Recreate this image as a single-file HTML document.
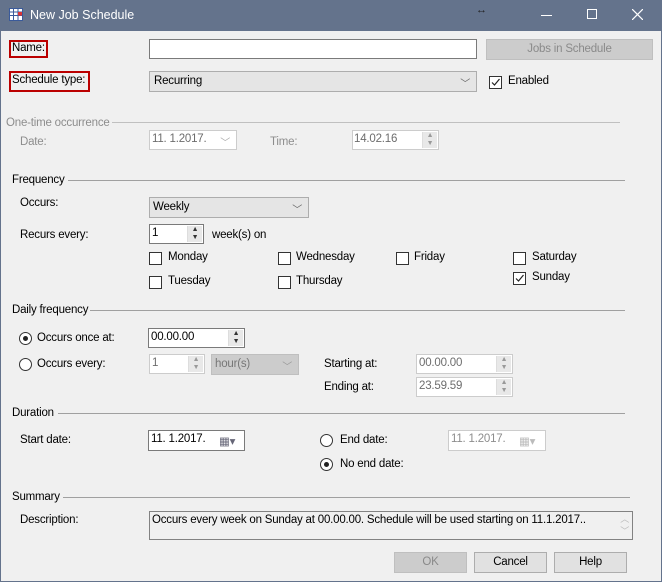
<!DOCTYPE html>
<html><head><meta charset="utf-8"><style>
*{box-sizing:border-box}
body{margin:0;width:662px;height:582px;overflow:hidden;background:#f0f0f0;font-family:"Liberation Sans",Arial,sans-serif;font-size:11.5px;letter-spacing:-0.2px;color:#000;position:relative}
.a{position:absolute;white-space:nowrap}
.win{position:absolute;left:0;top:0;width:662px;height:582px;border:1px solid #64738c;border-top:none}
.title{position:absolute;left:0;top:0;width:662px;height:31px;background:#64738c;color:#fff;font-size:12.5px;letter-spacing:0}
.box{position:absolute;background:#fff;border:1px solid #7a7a7a}
.dis{background:#fff;border-color:#ccc;color:#6d6d6d}
.combo{position:absolute;background:#e5e5e5;border:1px solid #adadad}
.line{position:absolute;height:1px;background:#a0a0a0}
.cb{position:absolute;width:13px;height:13px;border:1px solid #333;background:#fff}
.rb{position:absolute;width:13px;height:13px;border:1px solid #333;border-radius:50%;background:#fff}
.rb.on::after{content:"";position:absolute;left:3px;top:3px;width:5px;height:5px;border-radius:50%;background:#222}
.btn{position:absolute;background:#e1e1e1;border:1px solid #adadad;text-align:center;line-height:19px}
.spin{position:absolute;right:1px;top:1px;bottom:1px;width:15px;background:#e8e8e8;border-left:1px solid #ddd;font-size:7px;line-height:8px;text-align:center;color:#333}
.gray{color:#8d8d8d}
.chev{position:absolute;right:6px;top:3px;color:#666;font-size:10px}
</style></head><body>
<div class="title">
<svg class="a" style="left:9px;top:8px" width="14" height="13"><rect x="0.5" y="0.5" width="13" height="12" fill="#fff" stroke="#3a5a9a"/><path d="M0 4H14M0 7.5H14M4.5 0V13M9 0V13" stroke="#3a5a9a"/><rect x="9" y="4" width="4" height="3.5" fill="#d33"/></svg>
<span class="a" style="left:30px;top:8px">New Job Schedule</span>
<span class="a" style="left:476px;top:4px;color:#222;font-size:11px">↔</span>
<div class="a" style="left:541px;top:15px;width:11px;height:1px;background:#fff"></div>
<div class="a" style="left:587px;top:9px;width:10px;height:10px;border:1px solid #fff"></div>
<svg class="a" style="left:632px;top:9px" width="11" height="11"><path d="M0 0L11 11M11 0L0 11" stroke="#fff" stroke-width="1.2"/></svg>
</div>
<div class="win"></div>

<div class="a" style="left:9px;top:40px;width:39px;height:18px;border:2px solid #b00"></div>
<span class="a" style="left:12px;top:42px">Name:</span>
<div class="box" style="left:149px;top:39px;width:328px;height:20px"></div>
<div class="btn" style="left:486px;top:39px;width:167px;height:21px;background:#ccc;border-color:#bfbfbf;color:#8a8a8a">Jobs in Schedule</div>

<div class="a" style="left:9px;top:71px;width:81px;height:21px;border:2px solid #b00"></div>
<span class="a" style="left:12px;top:74px">Schedule type:</span>
<div class="combo" style="left:149px;top:71px;width:328px;height:21px"><span class="a" style="left:4px;top:3px">Recurring</span><span class="chev">﹀</span></div>
<div class="cb" style="left:489px;top:76px"><svg width="11" height="11" style="position:absolute;left:0;top:0"><path d="M2 5.5L4.5 8L9.5 2" stroke="#222" fill="none" stroke-width="1.2"/></svg></div>
<span class="a" style="left:508px;top:75px">Enabled</span>

<span class="a gray" style="left:6px;top:117px">One-time occurrence</span>
<div class="line" style="left:112px;top:122px;width:508px;background:#c0c0c0"></div>
<span class="a gray" style="left:20px;top:136px">Date:</span>
<div class="box dis" style="left:149px;top:130px;width:88px;height:20px"><span class="a" style="left:2px;top:2px">11.  1.2017.</span><span class="chev" style="color:#aaa">﹀</span></div>
<span class="a gray" style="left:270px;top:136px">Time:</span>
<div class="box dis" style="left:352px;top:130px;width:87px;height:20px"><span class="a" style="left:1px;top:2px">14.02.16</span><div class="spin" style="color:#999">▲<br>▼</div></div>

<span class="a" style="left:12px;top:174px">Frequency</span>
<div class="line" style="left:68px;top:180px;width:557px"></div>
<span class="a" style="left:20px;top:197px">Occurs:</span>
<div class="combo" style="left:149px;top:197px;width:160px;height:21px"><span class="a" style="left:3px;top:3px">Weekly</span><span class="chev">﹀</span></div>
<span class="a" style="left:20px;top:229px">Recurs every:</span>
<div class="box" style="left:149px;top:224px;width:55px;height:20px"><span class="a" style="left:2px;top:2px">1</span><div class="spin">▲<br>▼</div></div>
<span class="a" style="left:212px;top:229px">week(s) on</span>

<div class="cb" style="left:149px;top:252px"></div><span class="a" style="left:168px;top:251px">Monday</span>
<div class="cb" style="left:278px;top:252px"></div><span class="a" style="left:296px;top:251px">Wednesday</span>
<div class="cb" style="left:396px;top:252px"></div><span class="a" style="left:414px;top:251px">Friday</span>
<div class="cb" style="left:513px;top:252px"></div><span class="a" style="left:532px;top:251px">Saturday</span>
<div class="cb" style="left:149px;top:276px"></div><span class="a" style="left:168px;top:275px">Tuesday</span>
<div class="cb" style="left:278px;top:276px"></div><span class="a" style="left:296px;top:275px">Thursday</span>
<div class="cb" style="left:513px;top:272px"><svg width="11" height="11" style="position:absolute;left:0;top:0"><path d="M2 5.5L4.5 8L9.5 2" stroke="#222" fill="none" stroke-width="1.2"/></svg></div><span class="a" style="left:532px;top:271px">Sunday</span>

<span class="a" style="left:12px;top:304px">Daily frequency</span>
<div class="line" style="left:90px;top:310px;width:535px"></div>
<div class="rb on" style="left:19px;top:332px"></div><span class="a" style="left:37px;top:332px">Occurs once at:</span>
<div class="box" style="left:148px;top:328px;width:97px;height:20px"><span class="a" style="left:2px;top:2px">00.00.00</span><div class="spin">▲<br>▼</div></div>
<div class="rb" style="left:19px;top:358px"></div><span class="a" style="left:37px;top:358px">Occurs every:</span>
<div class="box dis" style="left:149px;top:354px;width:56px;height:20px"><span class="a" style="left:2px;top:2px">1</span><div class="spin" style="color:#999">▲<br>▼</div></div>
<div class="combo" style="left:211px;top:354px;width:88px;height:21px;background:#ccc;border-color:#bfbfbf;color:#777"><span class="a" style="left:3px;top:3px">hour(s)</span><span class="chev" style="color:#999">﹀</span></div>
<span class="a" style="left:324px;top:358px">Starting at:</span>
<div class="box dis" style="left:416px;top:354px;width:97px;height:20px"><span class="a" style="left:2px;top:2px">00.00.00</span><div class="spin" style="color:#999">▲<br>▼</div></div>
<span class="a" style="left:324px;top:381px">Ending at:</span>
<div class="box dis" style="left:416px;top:377px;width:97px;height:20px"><span class="a" style="left:2px;top:2px">23.59.59</span><div class="spin" style="color:#999">▲<br>▼</div></div>

<span class="a" style="left:12px;top:407px">Duration</span>
<div class="line" style="left:58px;top:413px;width:567px"></div>
<span class="a" style="left:20px;top:434px">Start date:</span>
<div class="box" style="left:148px;top:430px;width:97px;height:21px"><span class="a" style="left:2px;top:2px">11.  1.2017.</span><span class="a" style="left:70px;top:3px;color:#667">▦▾</span></div>
<div class="rb" style="left:320px;top:434px"></div><span class="a" style="left:340px;top:434px">End date:</span>
<div class="box dis" style="left:448px;top:430px;width:98px;height:21px"><span class="a" style="left:2px;top:2px;color:#8d8d8d">11.  1.2017.</span><span class="a" style="left:70px;top:3px;color:#bbb">▦▾</span></div>
<div class="rb on" style="left:320px;top:458px"></div><span class="a" style="left:340px;top:458px">No end date:</span>

<span class="a" style="left:12px;top:491px">Summary</span>
<div class="line" style="left:63px;top:497px;width:567px"></div>
<span class="a" style="left:20px;top:514px">Description:</span>
<div class="box" style="left:149px;top:511px;width:484px;height:29px;background:#f0f0f0;border-color:#828282"><span class="a" style="left:2px;top:2px">Occurs every week on Sunday at 00.00.00. Schedule will be used starting on 11.1.2017..</span><span class="a" style="right:3px;top:1px;color:#bbb;font-size:9px;line-height:12px">︿<br>﹀</span></div>

<div class="btn" style="left:394px;top:552px;width:73px;height:21px;background:#ccc;border-color:#bfbfbf;color:#8a8a8a">OK</div>
<div class="btn" style="left:474px;top:552px;width:73px;height:21px">Cancel</div>
<div class="btn" style="left:554px;top:552px;width:73px;height:21px">Help</div>
</body></html>
